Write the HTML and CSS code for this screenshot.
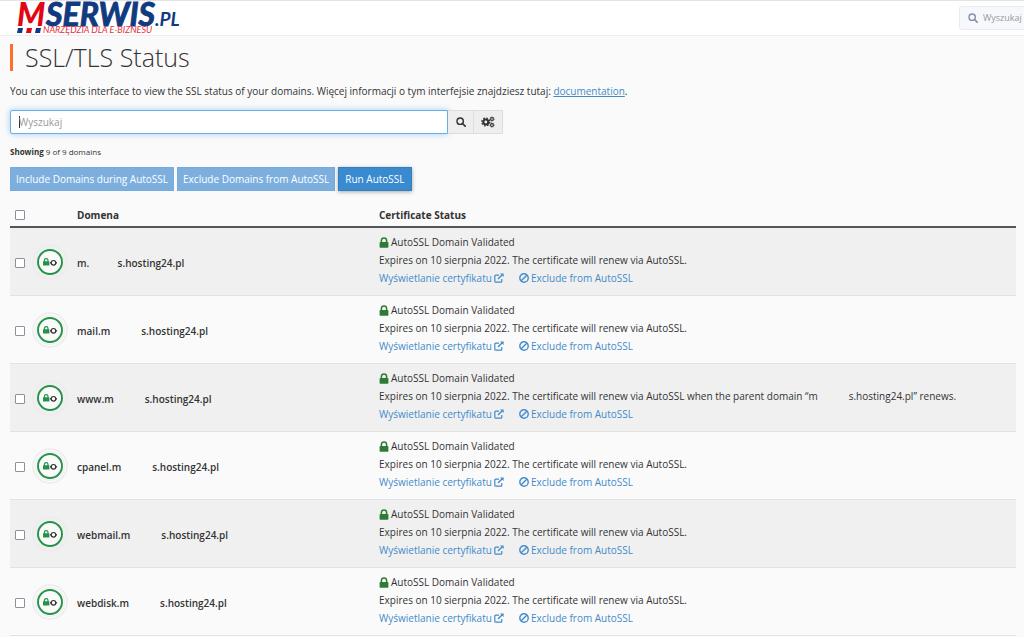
FILE: index.html
```html
<!DOCTYPE html>
<html lang="pl">
<head>
<meta charset="utf-8">
<title>SSL/TLS Status</title>
<link rel="stylesheet" href="styles.css">
</head>
<body>
<svg class="sprite" aria-hidden="true">
  <symbol id="search" viewBox="0 0 12 12"><circle cx="5" cy="5" r="3.8" fill="none" stroke="currentColor" stroke-width="1.7"/><path d="M7.8 7.8 11 11" stroke="currentColor" stroke-width="2" stroke-linecap="round"/></symbol>
  <symbol id="cogs" viewBox="0 0 14 12"><circle cx="4.8" cy="6" r="2.5" fill="none" stroke="currentColor" stroke-width="2.2"/><circle cx="4.8" cy="6" r="3.9" fill="none" stroke="currentColor" stroke-width="1.4" stroke-dasharray="1.6 1.46"/><circle cx="11" cy="3" r="1.4" fill="none" stroke="currentColor" stroke-width="1.1"/><circle cx="11" cy="3" r="2.2" fill="none" stroke="currentColor" stroke-width=".7" stroke-dasharray=".9 .83"/><circle cx="11" cy="9" r="1.4" fill="none" stroke="currentColor" stroke-width="1.1"/><circle cx="11" cy="9" r="2.2" fill="none" stroke="currentColor" stroke-width=".7" stroke-dasharray=".9 .83"/></symbol>
  <symbol id="lock" viewBox="0 0 10 11"><path d="M2.4 5.5V3.6a2.6 2.6 0 0 1 5.2 0v1.9" fill="none" stroke="currentColor" stroke-width="1.5"/><rect x=".6" y="5" width="8.8" height="5.7" rx=".8" fill="currentColor"/></symbol>
  <symbol id="external" viewBox="0 0 10 10"><path d="M5 2.2H1.7a.9.9 0 0 0-.9.9v5.2c0 .5.4.9.9.9h5.2c.5 0 .9-.4.9-.9V6" fill="none" stroke="currentColor" stroke-width="1.2"/><path d="M4 6 8 2" stroke="currentColor" stroke-width="1.5"/><path d="M6 .5h3.6v3.6z" fill="currentColor"/></symbol>
  <symbol id="ban" viewBox="0 0 10 10"><circle cx="5" cy="5" r="4.2" fill="none" stroke="currentColor" stroke-width="1.4"/><path d="M2.2 7.8 7.8 2.2" stroke="currentColor" stroke-width="1.4"/></symbol>
  <symbol id="badge" viewBox="0 0 36 36"><circle cx="18" cy="18" r="17" fill="none" stroke="#ececec" stroke-width="1.5"/><circle cx="18" cy="18" r="14.5" fill="none" stroke="#eeeeee"/><circle cx="18" cy="18" r="12" fill="#fafafa" stroke="#24934a" stroke-width="1.9"/><path d="M12.4 18v-1.5a1.8 1.8 0 0 1 3.6 0V18" fill="none" stroke="#24934a" stroke-width="1.2"/><rect x="11" y="17.2" width="6.4" height="4.3" rx=".5" fill="#24934a"/><circle cx="21.5" cy="18.8" r="2.3" fill="none" stroke="#333" stroke-width="1.2"/><path d="M18 18.8h1.4M23.6 18.8H25" stroke="#333" stroke-width="1.2"/></symbol>
</svg>

<header class="topbar">
  <a class="brand" href="#" aria-label="MSERWIS.PL">
    <svg width="170" height="36" viewBox="0 0 170 36">
      <text class="logo-m" x="4" y="26">M</text>
      <text class="logo-name" x="33" y="26">SERWIS</text>
      <text class="logo-tld" x="142" y="26">.PL</text>
      <text class="logo-tag" x="30" y="33">NARZĘDZIA DLA E-BIZNESU</text>
      <path d="M5 28h5l-1 5H4zM23 28h5l-1 5h-5z" fill="#123a80"/><path d="M14 28h5l-1 5h-5z" fill="#e30613"/>
    </svg>
  </a>
  <label class="quick"><svg class="quick-icon" aria-hidden="true"><use href="#search"/></svg><input class="quick-input" type="text" placeholder="Wyszukaj" aria-label="Wyszukaj"></label>
</header>

<main class="page">
  <h1 class="title">SSL/TLS Status</h1>
  <p class="intro">You can use this interface to view the SSL status of your domains. Więcej informacji o tym interfejsie znajdziesz tutaj: <a class="link underlined" href="#">documentation</a>.</p>
  <div class="filter">
    <input class="filter-input" type="text" placeholder="Wyszukaj" aria-label="Wyszukaj">
    <button class="tool" aria-label="Szukaj"><svg class="icon-small" aria-hidden="true"><use href="#search"/></svg></button>
    <button class="tool last" aria-label="Ustawienia"><svg class="icon-cogs" aria-hidden="true"><use href="#cogs"/></svg></button>
  </div>
  <p class="count"><strong>Showing</strong> 9 of 9 domains</p>
  <div class="actions">
    <button class="button" disabled>Include Domains during AutoSSL</button>
    <button class="button" disabled>Exclude Domains from AutoSSL</button>
    <button class="button primary">Run AutoSSL</button>
  </div>
  <table class="domains">
    <colgroup><col class="col-check"><col class="col-badge"><col class="col-domain"><col></colgroup>
    <thead><tr><th><input class="check" type="checkbox" aria-label="Zaznacz wszystkie"></th><th></th><th>Domena</th><th>Certificate Status</th></tr></thead>
    <tbody id="rows"></tbody>
  </table>
</main>
<script src="rows.js"></script>
</body>
</html>
```
FILE: styles.css
```css
* { box-sizing: border-box; }
body { margin: 0; background: #fafafa; color: #333; font: 10px/18px "Open Sans", sans-serif; }
.sprite { position: absolute; width: 0; height: 0; }
.topbar { display: flex; justify-content: space-between; align-items: center; height: 36px; background: #fff; border-top: 1px solid #e4e4e4; border-bottom: 1px solid #ebedf2; }
.brand { display: flex; margin-left: 13px; }
.brand svg { overflow: visible; }
.logo-m { font: italic 900 32px Lato, sans-serif; fill: #e30613; }
.logo-name { font: italic 700 32px Lato, sans-serif; fill: #123a80; stroke: #123a80; }
.logo-tld { font: italic 700 19px Lato, sans-serif; fill: #123a80; }
.logo-tag { font: italic 9px Lato, sans-serif; fill: #e3323c; }
.quick { display: flex; align-items: center; gap: 5px; width: 65px; height: 24px; padding-left: 8px; background: #f7f8fc; border: 1px solid #e8ebf3; border-right: 0; border-radius: 3px 0 0 3px; }
.quick-icon { flex: none; width: 10px; height: 10px; color: #8791ad; }
.quick-input { width: 100%; min-width: 0; padding: 0; border: 0; background: none; font: 9px/12px "Open Sans", sans-serif; }
.quick-input::placeholder { color: #999; }
.page { padding: 8px 8px 0 10px; }
.title { margin: 0; padding-left: 12px; border-left: 3px solid #ff6c2c; font-size: 25px; line-height: 27px; font-weight: 300; }
.intro { margin: 11px 0 10px; }
.link { display: inline-flex; align-items: center; gap: 2px; color: #428bca; text-decoration: none; }
.underlined { display: inline; text-decoration: underline; }
.filter { display: flex; height: 24px; }
.filter-input { width: 438px; padding: 0 8px; border: 1px solid #66afe9; border-radius: 2px 0 0 2px; background: linear-gradient(#333, #333) 8px 5px / 1px 12px no-repeat #fff; box-shadow: 0 0 6px #66afe999; font: inherit; outline: 0; }
.filter-input::placeholder { color: #999; }
.tool { display: flex; align-items: center; justify-content: center; width: 26px; padding: 0; border: 1px solid #ddd; border-left: 0; background: #eee; color: #333; }
.last { width: 29px; }
.icon-cogs { width: 14px; height: 12px; }
.count { margin: 9px 0 6px; font-size: 8px; }
.actions { display: flex; gap: 3px; }
.button { height: 24px; padding: 0 5px; border: 1px solid #76abdc; background: #7dafde; color: #fff; font: 10px/18px "Open Sans", sans-serif; }
.primary { padding: 0 6px; border-color: #357ebd; background: #3a8ad0; box-shadow: 0 1px 4px #0005; }
.domains { width: 100%; margin-top: 12px; border-collapse: collapse; table-layout: fixed; }
.col-check { width: 22px; }
.col-badge { width: 40px; }
.col-domain { width: 302px; }
.domains th { height: 24px; padding: 0 5px; border-bottom: 2px solid #555; text-align: left; }
.domains td { padding: 5px 5px 8px; border-bottom: 1px solid #e2e2e2; }
.domains tbody tr:nth-child(odd) { background: #f0f0f0; }
.domains td.badge-cell { padding: 0; }
.domains td.check-cell, .domains td.domain { padding: 8px 5px 5px; }
.badge { display: block; width: 36px; height: 36px; }
.check { display: block; appearance: none; width: 10px; height: 10px; margin: 0; border: 1px solid #8f8f9d; border-radius: 1px; background: #fff; }
.domain { font-weight: 600; }
.hidden-part { display: inline-block; width: 31px; }
.status { display: flex; align-items: center; gap: 2px; }
.icon-lock { width: 10px; height: 11px; color: #2f7a37; }
.icon-small { width: 10px; height: 10px; }
.row-actions { display: flex; gap: 15px; }
```
FILE: rows.js
```js
const gap = '<span class="hidden-part"></span>';
const prefixes = ["m", "mail.m", "www.m", "cpanel.m", "webmail.m", "webdisk.m"];
document.getElementById("rows").innerHTML = prefixes.map((prefix) => {
  const suffix = prefix === "www.m" ? ` when the parent domain “m${gap}s.hosting24.pl” renews.` : ".";
  const domainGap = prefix === "m" ? '<span class="hidden-part">.</span>' : gap;
  return `<tr>
    <td class="check-cell"><input class="check" type="checkbox" aria-label="${prefix}"></td>
    <td class="badge-cell"><svg class="badge" aria-hidden="true"><use href="#badge"/></svg></td>
    <td class="domain">${prefix}${domainGap}s.hosting24.pl</td>
    <td>
      <div class="status"><svg class="icon-lock" aria-hidden="true"><use href="#lock"/></svg>AutoSSL Domain Validated</div>
      <div>Expires on 10 sierpnia 2022. The certificate will renew via AutoSSL${suffix}</div>
      <div class="row-actions">
        <a class="link" href="#">Wyświetlanie certyfikatu<svg class="icon-small" aria-hidden="true"><use href="#external"/></svg></a>
        <a class="link" href="#"><svg class="icon-small" aria-hidden="true"><use href="#ban"/></svg>Exclude from AutoSSL</a>
      </div>
    </td>
  </tr>`;
}).join("");
```
